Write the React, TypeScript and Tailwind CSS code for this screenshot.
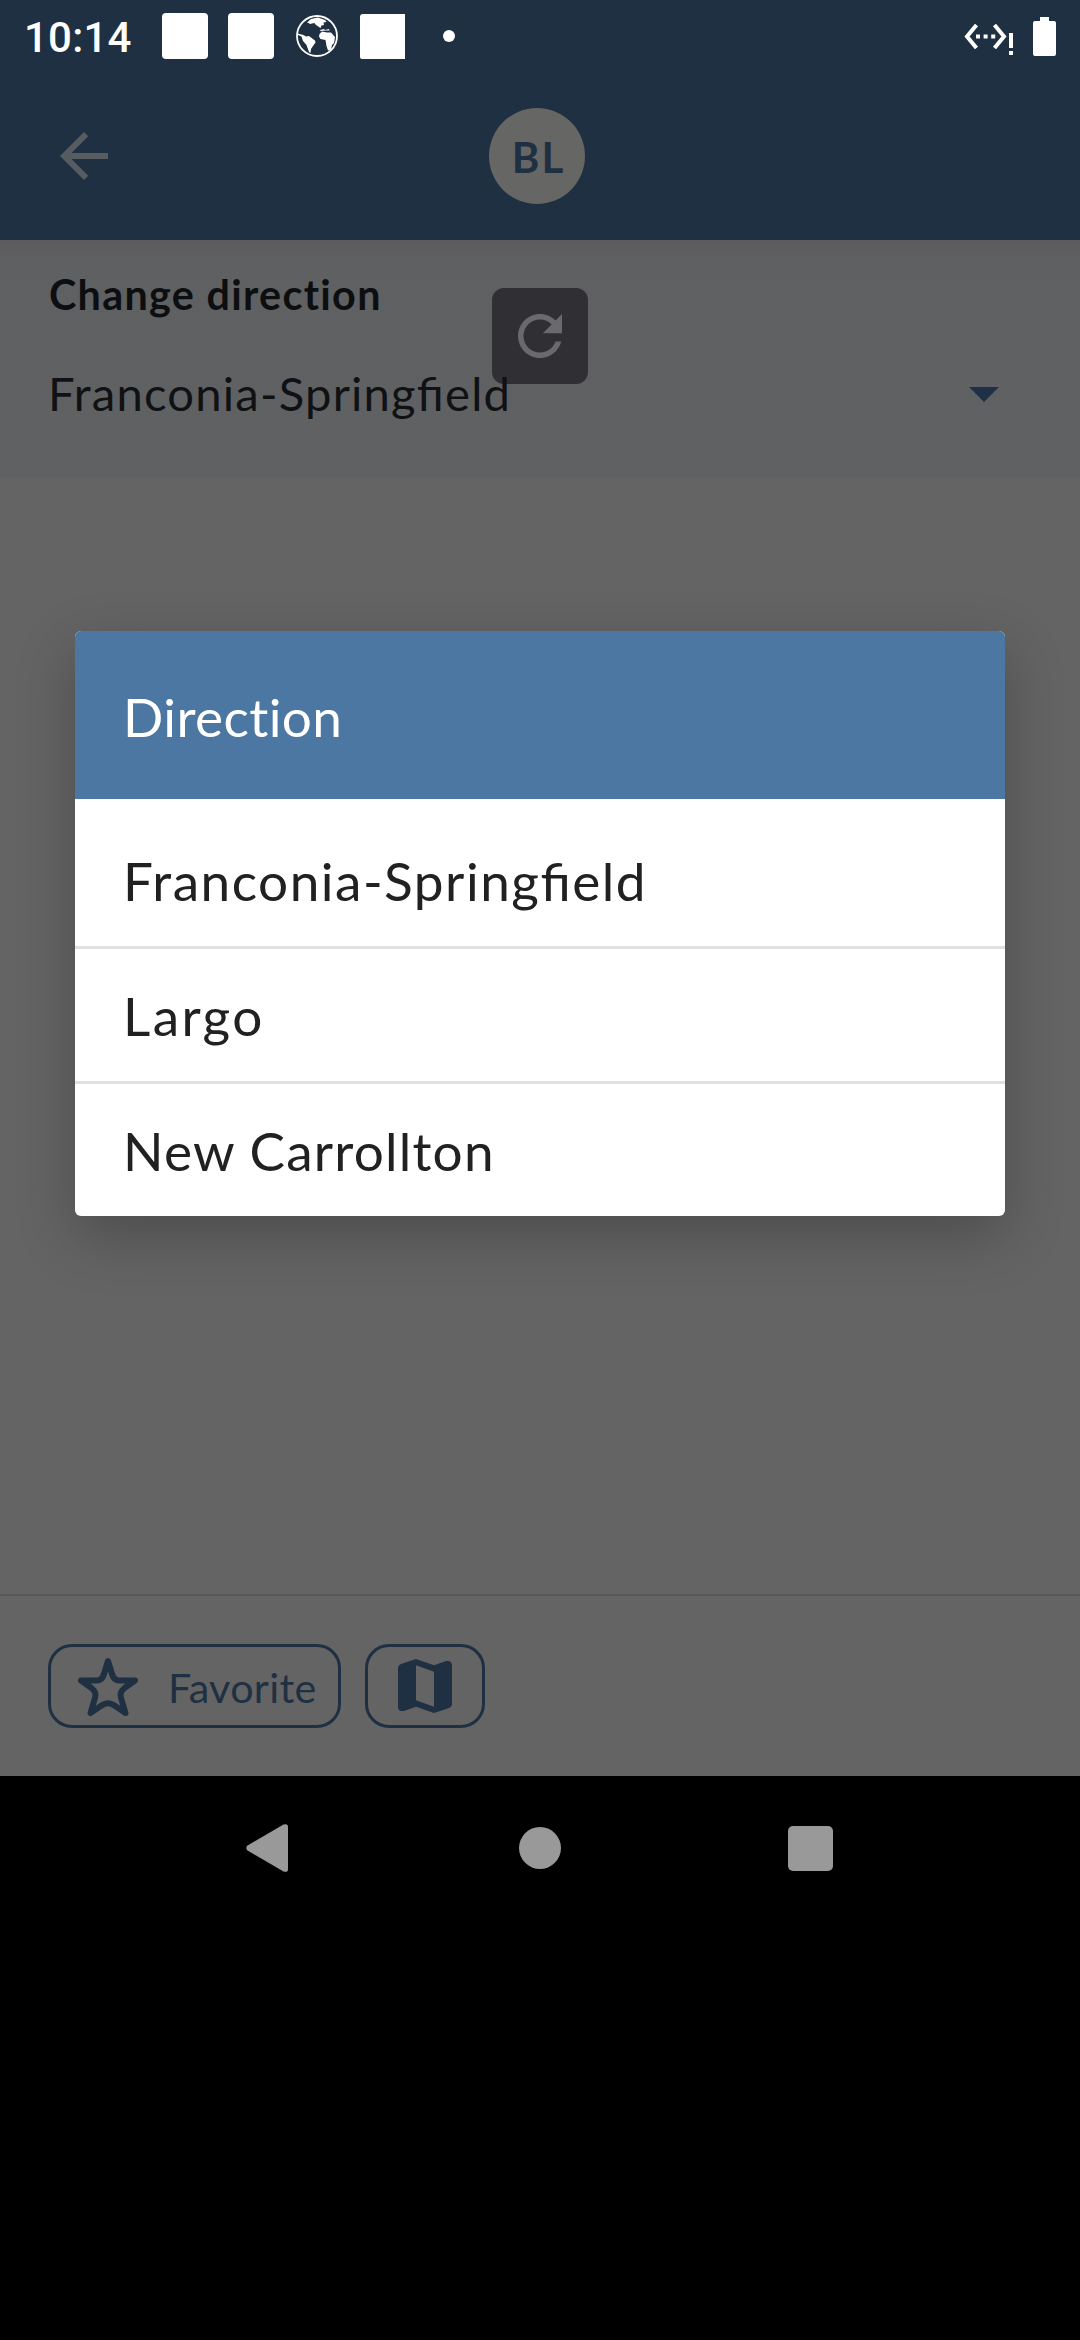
const options = [
  { label: "Franconia-Springfield", spacing: "tracking-[1.5px]" },
  { label: "Largo", spacing: "tracking-[2.4px]" },
  { label: "New Carrollton", spacing: "tracking-[1.2px]" },
];

function StatusBar() {
  return (
    <div className="flex h-[72px] items-center px-[24px] text-white">
      <span className="w-[138px] pt-[3px] font-[Roboto] text-[42px] font-medium leading-none tracking-[0.2px]">10:14</span>
      <span className="size-[46px] rounded-[4px] bg-white" />
      <span className="ml-[20px] size-[46px] rounded-[4px] bg-white" />
      <svg viewBox="0 0 42 42" className="ml-[22px] size-[42px]">
        <circle cx="21" cy="21" r="20" fill="none" stroke="#fff" strokeWidth="1.8" />
        <path
          fill="#fff"
          d="M1.500 18.500l6 1.500 2.500 1.500 3-.500 6 4.500.500 2-2.500 3.500-2 3-.500 4-1.500-1-2.500-7-3.500-4-1.500-4.500-3.500-1.500zM11 7.500l4-3.500 7-1.500 7 2.500 1.500 2-3 .500.500 2.500-2.500 .500-1 2.500-3-2-2-1.500-1-1.500-2.500 .500-2 .500-1.500-1zM24 15l4-1 1 1 4-1 .500 1.500-4 0-5 .500zM23.500 19l2.500-2.500 5 1 4 0 4 4.500-1 6-2 2-1 5-3 .500-1.500-4.500-1-6-5-1-1.500-2.500z"
        />
      </svg>
      <span className="ml-[22px] size-[45px] rounded-bl-[2px] rounded-tl-[3px] bg-white" />
      <span className="ml-[38px] size-[12px] rounded-full bg-white" />
      <svg viewBox="0 0 50 40" className="ml-auto h-[40px] w-[50px]" fill="none" stroke="#fff" strokeWidth="4">
        <path d="M13.500 9L4 20.500L13.500 32M31.500 9L41 20.500L31.500 32" />
        <path d="M13 20.500h20" strokeDasharray="4 3.600" />
        <path d="M48 17v15M48 35v4" />
      </svg>
      <svg viewBox="0 0 23 39" className="ml-[20px] h-[39px] w-[23px]" fill="#fff">
        <path d="M7 0h9v4h5a2 2 0 0 1 2 2v31a2 2 0 0 1-2 2H2a2 2 0 0 1-2-2V6a2 2 0 0 1 2-2h5z" />
      </svg>
    </div>
  );
}

function DirectionDialog() {
  return (
    <div
      role="dialog"
      className="absolute left-[75px] top-[631px] w-[930px] overflow-hidden rounded-[6px] bg-white text-[53.1px] text-[#212121] shadow-[0_20px_60px_rgba(0,0,0,0.24)]"
    >
      <div className="flex h-[168px] items-center bg-[#4c77a3] pl-[48px] pt-[3px] tracking-[0.4px] text-white">Direction</div>
      <ul className="divide-y-[3px] divide-[#e0e0e0] pt-[15px]">
        {options.map((option) => (
          <li key={option.label} className="box-content flex h-[132px] items-center">
            <span className={`pl-[48px] pt-[2px] [font-feature-settings:'liga'_1] ${option.spacing}`}>{option.label}</span>
          </li>
        ))}
      </ul>
    </div>
  );
}

function NavigationBar() {
  return (
    <nav className="grid h-[144px] grid-cols-3 items-center bg-black px-[135px]">
      <svg viewBox="0 0 42 48" className="mr-[6px] h-[48px] w-[42px] justify-self-center" fill="#999">
        <path d="M1.500 21.500L37.500 0.600Q42 -1 42 3V45Q42 49 37.500 47.400L1.500 26.500Q-1 24 1.500 21.500z" />
      </svg>
      <span className="size-[42px] justify-self-center rounded-full bg-[#999]" />
      <span className="size-[45px] justify-self-center rounded-[5px] bg-[#999]" />
    </nav>
  );
}

export default function App() {
  return (
    <div className="relative flex h-[2340px] w-[1080px] flex-col overflow-hidden bg-black font-[Lato,sans-serif]">
      <header className="h-[240px] bg-[#1f3042]">
        <StatusBar />
        <div className="grid h-[168px] grid-cols-[441px_96px_1fr] items-center pl-[48px]">
          <svg viewBox="0 0 24 24" className="size-[72px]" fill="#565c60">
            <path d="M20 11H7.830l5.590-5.590L12 4l-8 8 8 8 1.410-1.410L7.830 13H20v-2z" />
          </svg>
          <div className="flex size-[96px] items-center justify-center rounded-full bg-[#666664] pl-[3px] pt-[2px] text-[42px] font-bold tracking-[2px] text-[#1f3042]">
            BL
          </div>
        </div>
      </header>

      <section className="h-[238px] bg-linear-to-b from-[#5b5b5e] via-[#5f6062] via-[8%] to-[#5f6163]">
        <h2 className="pl-[49px] pt-[29px] text-[41.3px] font-bold leading-[50px] tracking-[1.3px] text-[#0d0e10]">Change direction</h2>
        <div className="mt-[38px] flex h-[72px] items-center justify-between pl-[48px] pr-[60px] text-[#101113]">
          <span className="relative z-10 pt-px text-[47.2px] tracking-[1.2px] [font-feature-settings:'liga'_1]">Franconia-Springfield</span>
          <svg viewBox="0 0 24 24" className="size-[72px]" fill="#1f3148">
            <path d="M7 10l5 5 5-5z" />
          </svg>
        </div>
        <button className="absolute left-[492px] top-[288px] flex size-[96px] items-center justify-center rounded-[12px] bg-[#2f2f34]">
          <svg viewBox="0 0 24 24" className="size-[66px]" fill="#6a6a6c">
            <path d="M17.650 6.350C16.200 4.900 14.210 4 12 4c-4.420 0-7.990 3.580-7.990 8s3.570 8 7.990 8c3.730 0 6.840-2.550 7.730-6h-2.080c-.820 2.330-3.040 4-5.650 4-3.310 0-6-2.690-6-6s2.690-6 6-6c1.660 0 3.140.690 4.220 1.780L13 11h7V4l-2.350 2.350z" />
          </svg>
        </button>
      </section>

      <main className="h-[1116px] bg-[#646464]" />

      <footer className="flex h-[182px] items-start gap-[24px] border-t-[2px] border-[#585858] bg-[#646464] pl-[48px] pt-[48px] text-[#1f3042]">
        <button className="flex h-[84px] w-[293px] items-center rounded-[24px] border-[3px] border-[#1f3042] pl-[21px] text-[41.3px]">
          <svg viewBox="0 0 72 72" className="size-[72px]" fill="none" stroke="#1f3042" strokeWidth="6" strokeLinejoin="round">
            <path d="M36 11L40 24Q42 30.500 47 30.500L63 30.500L52.500 38Q47 42.500 49 48L53.500 63L42.500 55.500Q36 51 29.500 55.500L18.500 63L23 48Q25 42.500 19.500 38L9 30.500L25 30.500Q30 30.500 32 24z" />
          </svg>
          <span className="ml-[24px] pt-[3px] tracking-[0.3px]">Favorite</span>
        </button>
        <button className="flex h-[84px] w-[120px] items-center justify-center rounded-[24px] border-[3px] border-[#1f3042]">
          <svg viewBox="0 0 24 24" className="size-[72px]" fill="#1f3042" fillRule="evenodd">
            <path d="M15 5.100L9 3 4.200 4.600Q3 5 3 6.200V18.800Q3 20.700 5 20.300L9 18.900l6 2.100 4.800-1.600Q21 19 21 17.800V5.200Q21 3.300 19 3.700L15 5.100zM15 18.890l-6-2.110V5.110l6 2.110z" />
          </svg>
        </button>
      </footer>

      <NavigationBar />
      <DirectionDialog />
    </div>
  );
}
